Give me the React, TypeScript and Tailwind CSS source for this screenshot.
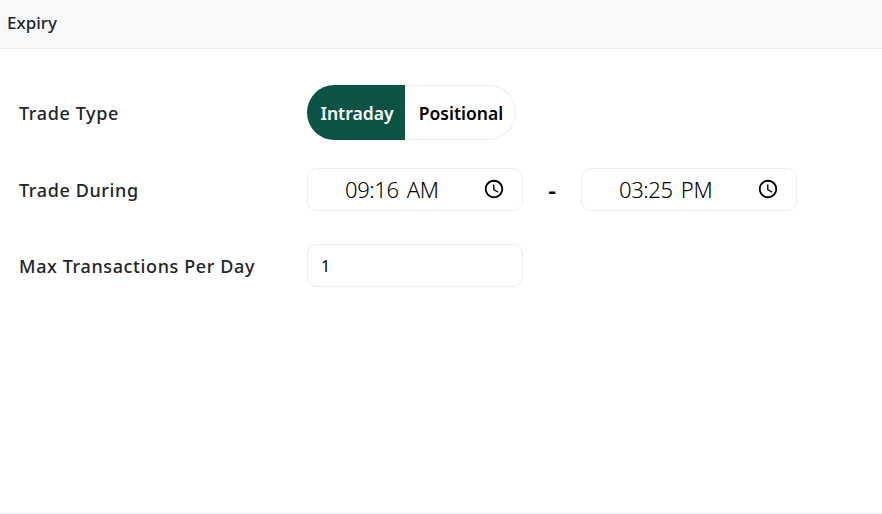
const font = "font-['Noto_Sans','Open_Sans',sans-serif]";

function ClockIcon() {
  return (
    <svg width="22" height="22" viewBox="0 0 24 24" className="block shrink-0" fill="#000">
      <path d="M11.99 2C6.47 2 2 6.48 2 12s4.47 10 9.99 10C17.52 22 22 17.52 22 12S17.52 2 11.99 2zM12 20c-4.42 0-8-3.58-8-8s3.58-8 8-8 8 3.58 8 8-3.58 8-8 8z" />
      <path d="M12.5 7H11v6l5.25 3.15.75-1.23-4.5-2.67z" />
    </svg>
  );
}

function TimeBox({ time, period }: { time: string; period: string }) {
  return (
    <div className="w-[216px] h-[43px] rounded-[10px] border border-[#eeeeee] bg-white flex items-center pl-[37px] pr-[17px] text-[22px] font-[350] text-black">
      <span className="tracking-[-0.4px]">{time}</span>
      <span className="ml-[8px] tracking-[-0.2px]">{period}</span>
      <span className="ml-auto -mt-[2px]"><ClockIcon /></span>
    </div>
  );
}

const label = "w-[288px] text-[18px] font-medium tracking-[0.62px] translate-y-px";

export default function App() {
  return (
    <div className={`${font} w-[882px] h-[514px] bg-white flex flex-col border-b border-[#e9ecef]`}>
      <div className="h-[49px] shrink-0 bg-[#f8f9fa] border-b border-[#eeeeee] pl-[7px] pb-[2px] flex items-center text-[17px] font-medium text-[#212529]">
        Expiry
      </div>
      <div className="pl-[19px] pt-[36px] flex flex-col text-[#212529]">
        <div className="flex items-center h-[55px]">
          <div className={label}>Trade Type</div>
          <div className="flex w-[209px] h-[55px] text-[17.5px] font-semibold">
            <div className="w-[98px] rounded-l-[28px] bg-[#0b5345] text-white flex items-center justify-center pl-[2px] pt-[2px]">Intraday</div>
            <div className="flex-1 rounded-r-[28px] border-y border-r border-[#eeeeee] flex items-center justify-center text-black pl-[2px] pt-[2px]">Positional</div>
          </div>
        </div>
        <div className="flex items-center h-[43px] mt-[28px]">
          <div className={label}>Trade During</div>
          <TimeBox time="09:16" period="AM" />
          <div className="w-[58px] text-center text-[24px] font-semibold text-black">-</div>
          <TimeBox time="03:25" period="PM" />
        </div>
        <div className="flex items-center h-[43px] mt-[33px]">
          <div className={label}>Max Transactions Per Day</div>
          <input
            readOnly
            value="1"
            className="w-[216px] h-[43px] rounded-[10px] border border-[#eeeeee] bg-white px-[13px] text-[16px] text-black outline-none"
          />
        </div>
      </div>
    </div>
  );
}
